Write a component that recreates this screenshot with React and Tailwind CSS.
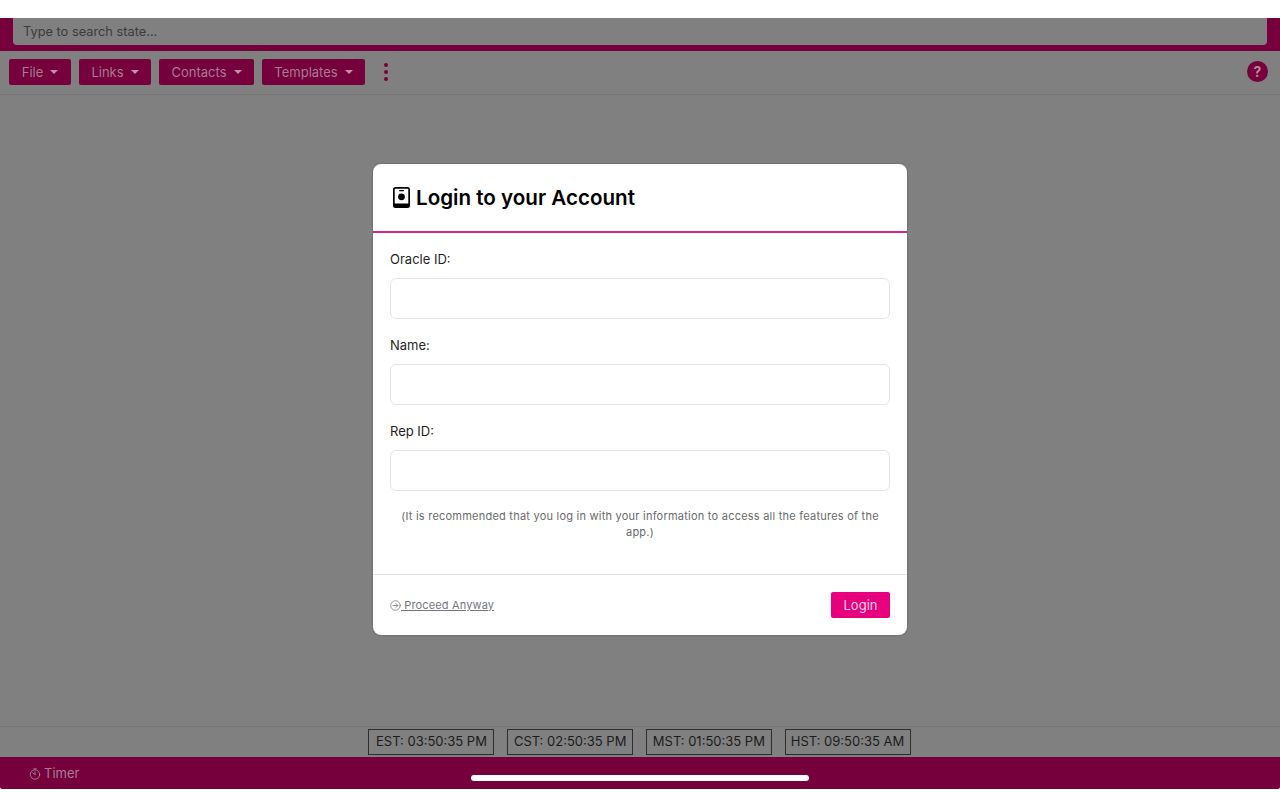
// App.jsx
// Login modal shown over the dimmed state search page

const MENUS = [
  { label: 'File', width: 'w-[62px]' },
  { label: 'Links', width: 'w-[72px]' },
  { label: 'Contacts', width: 'w-[95px]' },
  { label: 'Templates', width: 'w-[103px]' },
];

const CLOCKS = ['EST: 03:50:35 PM', 'CST: 02:50:35 PM', 'MST: 01:50:35 PM', 'HST: 09:50:35 AM'];

const FIELDS = ['Oracle ID:', 'Name:', 'Rep ID:'];

function MenuButton({ label, width }) {
  return (
    <button className={`${width} h-[26px] pt-[2px] flex items-center justify-center gap-[7px] bg-[#75003c] rounded-[2px] text-[13px] text-[#a67c93]`}>
      {label}
      <span className="w-0 h-0 mb-[2px] border-x-[4px] border-x-transparent border-t-[4px] border-t-[#bb94a8]"></span>
    </button>
  );
}

function BadgeIcon() {
  return (
    <svg className="w-[17px] h-[21px]" viewBox="0 0 17 21" fill="none">
      <path fillRule="evenodd" fill="#000" d="M2.500 0h12A2.500 2.500 0 0 1 17 2.500v16a2.500 2.500 0 0 1-2.500 2.500h-12A2.500 2.500 0 0 1 0 18.500v-16A2.500 2.500 0 0 1 2.500 0Zm0 1.800a.8.8 0 0 0-.8.8V16.500h13.600V2.600a.8.8 0 0 0-.8-.8Z" />
      <rect x="6" y="3" width="5" height="1.200" rx="0.6" fill="#000" />
      <circle cx="8.500" cy="9.800" r="3.400" fill="#000" />
    </svg>
  );
}

function TimerIcon() {
  return (
    <svg className="w-[12px] h-[12px]" viewBox="0 0 12 12" fill="none" stroke="#a67c93" strokeWidth="1" strokeLinecap="round">
      <circle cx="6" cy="6.500" r="4.700" />
      <path d="M4.800.8h2.400M6 6.500 3.800 5M6 6.500V4" />
    </svg>
  );
}

function ArrowCircleIcon() {
  return (
    <svg className="w-[11px] h-[11px] shrink-0" viewBox="0 0 12 12" fill="none" stroke="#7b8087" strokeWidth="0.9" strokeLinecap="round" strokeLinejoin="round">
      <circle cx="6" cy="6" r="5.200" />
      <path d="M3.300 6h5.200M6.400 3.900 8.500 6 6.400 8.100" />
    </svg>
  );
}

export default function App() {
  return (
    <div className="relative h-[800px] w-[1280px] overflow-hidden bg-white flex flex-col font-['Inter',sans-serif]">
      <div className="h-[18px] shrink-0 bg-white"></div>

      <div className="h-[33px] shrink-0 bg-[#75003c] pl-[13px] pr-[13px] pb-[6px]">
        <div className="h-full bg-[#808080] rounded-b-[4px] pl-[10px] flex items-center text-[12.8px] text-[#3b3b3b]">
          Type to search state...
        </div>
      </div>

      <div className="h-[44px] shrink-0 bg-[#808080] border-b border-[#777777] pl-[9px] pr-[12px] pb-[2px] flex items-center">
        <div className="flex items-center gap-[8px]">
          {MENUS.map((menu) => (
            <MenuButton key={menu.label} label={menu.label} width={menu.width} />
          ))}
        </div>
        <div className="ml-[19px] flex flex-col gap-[3px]">
          <span className="w-[4px] h-[4px] rounded-full bg-[#75003c]"></span>
          <span className="w-[4px] h-[4px] rounded-full bg-[#75003c]"></span>
          <span className="w-[4px] h-[4px] rounded-full bg-[#75003c]"></span>
        </div>
        <div className="ml-auto w-[21px] h-[21px] rounded-full bg-[#75003c] flex items-center justify-center text-[14px] font-bold text-[#b58a9f]">
          ?
        </div>
      </div>

      <div className="flex-1 bg-[#808080]"></div>

      <div className="h-[31px] shrink-0 bg-[#808080] border-t border-[#777777] pr-[1px] flex items-start justify-center gap-[12.7px] pt-[2px]">
        {CLOCKS.map((clock) => (
          <div key={clock} className="w-[126px] h-[26px] border border-[#2e2e2e] flex items-center justify-center text-[13px] text-[#1c1c1c] whitespace-nowrap">
            {clock}
          </div>
        ))}
      </div>

      <div className="h-[32px] shrink-0 bg-[#75003c] rounded-b-[2px] pl-[29px] pt-[1px] flex items-center gap-[3px] text-[13px] text-[#a67c93] relative">
        <TimerIcon />
        Timer
        <div className="absolute left-[471px] top-[18px] w-[338px] h-[6px] rounded-full bg-white"></div>
      </div>

      <div className="h-[11px] shrink-0 bg-white"></div>

      {/* Modal */}
      <div className="absolute left-[373px] top-[164px] w-[534px] h-[471px] bg-white rounded-[8px] flex flex-col shadow-[0_0_2px_rgba(0,0,0,0.4)]">
        <div className="h-[69px] shrink-0 border-b-2 border-[#d6248a] pl-[20px] flex items-center gap-[6px]">
          <BadgeIcon />
          <h2 className="pt-[1px] text-[20.6px] font-semibold text-black">Login to your Account</h2>
        </div>

        <div className="flex-1 pl-[17px] pr-[17px] pt-[18px]">
          <div className="flex flex-col gap-[18px]">
            {FIELDS.map((field) => (
              <div key={field} className="flex flex-col">
                <label className="h-[17px] leading-[17px] text-[13px] text-[#1f1f1f]">{field}</label>
                <input className="mt-[10px] h-[41px] w-full border border-[#e3e5ea] rounded-[6px] bg-white" />
              </div>
            ))}
          </div>
          <p className="mt-[17px] px-[5px] text-center text-[11px] leading-[16px] tracking-[0.23px] text-[#6a6a6a]">
            (It is recommended that you log in with your information to access all the features of the app.)
          </p>
        </div>

        <div className="h-[61px] shrink-0 border-t border-[#e2e3e6] pl-[17px] pr-[17px] flex items-center justify-between">
          <a className="flex items-center text-[11px] tracking-[0.15px] text-[#72767d] underline whitespace-pre">
            <ArrowCircleIcon />
            {' Proceed Anyway'}
          </a>
          <button className="w-[59px] h-[26px] pt-[1px] bg-[#e6007e] rounded-[2px] text-[13px] text-[#fbd0e6]">Login</button>
        </div>
      </div>
    </div>
  );
}
